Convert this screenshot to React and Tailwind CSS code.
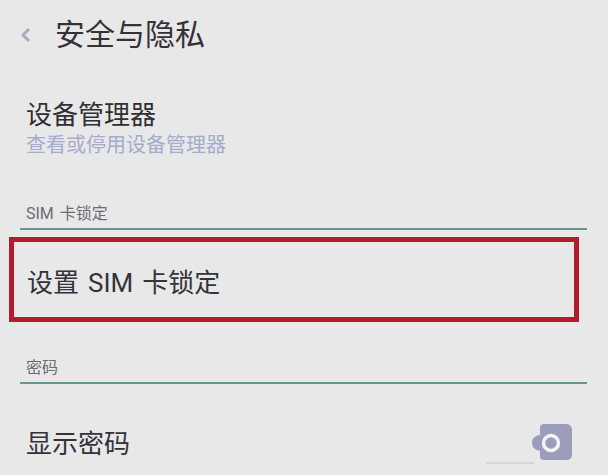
import React from "react";

const font = { fontFamily: 'Roboto, "Noto Sans CJK SC", sans-serif' };

function BackChevron() {
  return (
    <svg width="12" height="16" viewBox="0 0 12 16" className="shrink-0">
      <path d="M9 2 L3 8 L9 14" fill="none" stroke="#a9a9c6" strokeWidth="3" strokeLinejoin="round" />
    </svg>
  );
}

function ToggleKnob() {
  return (
    <svg width="46" height="40" viewBox="0 0 46 40">
      <path
        d="M12 4 Q12 0 16 0 L38 0 Q44 0 44 6 L44 30 Q44 36 38 36 L16 36 Q12 36 12 32 L12 27 Q4 26 4 18.5 Q4 12 12 11 Z"
        fill="#9b9dbb"
      />
      <circle cx="23" cy="19" r="7.5" fill="none" stroke="#f4f4f8" strokeWidth="3.5" />
    </svg>
  );
}

function SectionHeader({ children }) {
  return (
    <div className="ml-[20px] mr-[21px] border-b-2 border-[#67958f] pb-[6px]">
      <div className="pl-[6px] text-[16px] leading-[16px] text-[#6c6c74]">{children}</div>
    </div>
  );
}

export default function App() {
  return (
    <div className="w-[608px] h-[475px] overflow-hidden bg-[#e8e8e8]" style={font}>
      {/* header */}
      <div className="flex items-center pt-[20px] pl-[20px] h-[50px]">
        <BackChevron />
        <div className="ml-[23px] text-[30px] leading-[30px] text-[#333337]">安全与隐私</div>
      </div>

      {/* device manager */}
      <div className="pl-[26px] pt-[52px]">
        <div className="text-[26px] leading-[26px] text-[#2f2f34]">设备管理器</div>
        <div className="mt-[7px] text-[20px] leading-[20px] text-[#a5abcc]">查看或停用设备管理器</div>
      </div>

      {/* SIM lock */}
      <div className="pt-[51px]">
        <SectionHeader>
          SIM<span className="ml-[6px]">卡锁定</span>
        </SectionHeader>
      </div>
      <div className="ml-[9px] mt-[7px] w-[570px] h-[85px] border-[5px] border-[#b11d2b] flex items-start pl-[13px] pt-[28px]">
        <div className="text-[26px] leading-[26px] text-[#333338]">
          设置<span className="mx-[9px]">SIM</span>卡锁定
        </div>
      </div>

      {/* password */}
      <div className="pt-[38px]">
        <SectionHeader>密码</SectionHeader>
      </div>
      <div className="flex items-start justify-between pl-[26px] pr-[34px] mt-[40px]">
        <div className="mt-[7px] text-[26px] leading-[26px] text-[#333338]">显示密码</div>
        <div className="relative">
          <ToggleKnob />
          <div className="absolute left-[-42px] top-[38px] w-[48px] h-[2px] bg-[#d6d6d8]" />
        </div>
      </div>
    </div>
  );
}
